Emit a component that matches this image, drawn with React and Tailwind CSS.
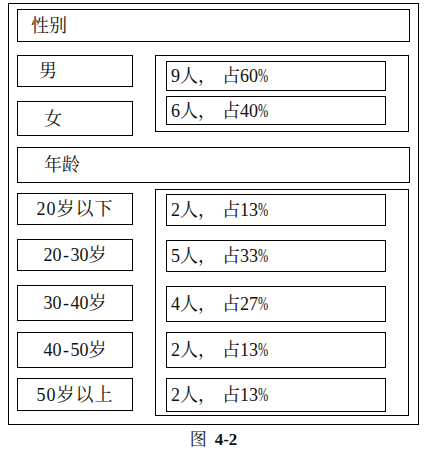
function Cell({ h, mt, children, className = "" }) {
    return (
        <div className={`border border-black flex items-center ${h} ${mt} ${className}`}>
            {children}
        </div>
    )
}

// half-width dash and percent, like the Song font in the original document
const Dash = () => <span className="inline-block w-[9px] text-center">-</span>
const Pct = () => (
    <span className="inline-block w-[10px]">
        <span className="inline-block scale-x-[0.68] origin-left">%</span>
    </span>
)

function Stat({ n, p, h, mt }) {
    return (
        <Cell h={h} mt={mt} className="pl-[4px]">
            <span>{n}人，</span>
            <span className="ml-[6px]">占{p}</span>
            <Pct />
        </Cell>
    )
}

function Range({ a, b, h, mt }) {
    return (
        <Cell h={h} mt={mt} className="justify-center">
            {a}<Dash />{b}岁
        </Cell>
    )
}

export default function App() {
    return (
        <div className="w-[435px] h-[454px] bg-white text-[#111] text-[18px] leading-none font-['Liberation_Serif','Noto_Serif_CJK_SC',serif]">
            <div className="ml-[8px] pt-[3px] w-[411px]">
                <div className="border border-black h-[422px] px-[8px] pt-[5px]">
                    <Cell h="h-[33px]" mt="" className="pl-[13px]">性别</Cell>

                    <div className="flex mt-[13px]">
                        <div className="w-[116px]">
                            <Cell h="h-[32px]" mt="" className="pl-[21px]">男</Cell>
                            <Cell h="h-[35px]" mt="mt-[14px]" className="pl-[26px]">女</Cell>
                        </div>
                        <div className="ml-[22px] w-[254px] h-[77px] border border-black pl-[10px] pt-[5px]">
                            <Stat n="9" p="60" h="h-[30px] w-[220px]" mt="" />
                            <Stat n="6" p="40" h="h-[29px] w-[220px]" mt="mt-[5px]" />
                        </div>
                    </div>

                    <Cell h="h-[36px]" mt="mt-[11px]" className="pl-[26px]">年龄</Cell>

                    <div className="flex mt-[6px]">
                        <div className="w-[116px] pt-[4px]">
                            <Cell h="h-[32px]" mt="" className="justify-center tracking-[1px]">20岁以下</Cell>
                            <Range a="20" b="30" h="h-[32px]" mt="mt-[14px]" />
                            <Range a="30" b="40" h="h-[36px]" mt="mt-[14px]" />
                            <Range a="40" b="50" h="h-[36px]" mt="mt-[11px]" />
                            <Cell h="h-[33px]" mt="mt-[10px]" className="justify-center tracking-[1px]">50岁以上</Cell>
                        </div>
                        <div className="ml-[22px] w-[254px] h-[227px] border border-black pl-[10px] pt-[4px]">
                            <Stat n="2" p="13" h="h-[32px] w-[220px]" mt="" />
                            <Stat n="5" p="33" h="h-[32px] w-[220px]" mt="mt-[14px]" />
                            <Stat n="4" p="27" h="h-[36px] w-[220px]" mt="mt-[14px]" />
                            <Stat n="2" p="13" h="h-[36px] w-[220px]" mt="mt-[10px]" />
                            <Stat n="2" p="13" h="h-[34px] w-[220px]" mt="mt-[10px]" />
                        </div>
                    </div>
                </div>
                <div className="h-[28px] flex items-center justify-center text-[17px]">
                    <span>图</span>
                    <span className="ml-[8px] font-bold">4-2</span>
                </div>
            </div>
        </div>
    )
}
